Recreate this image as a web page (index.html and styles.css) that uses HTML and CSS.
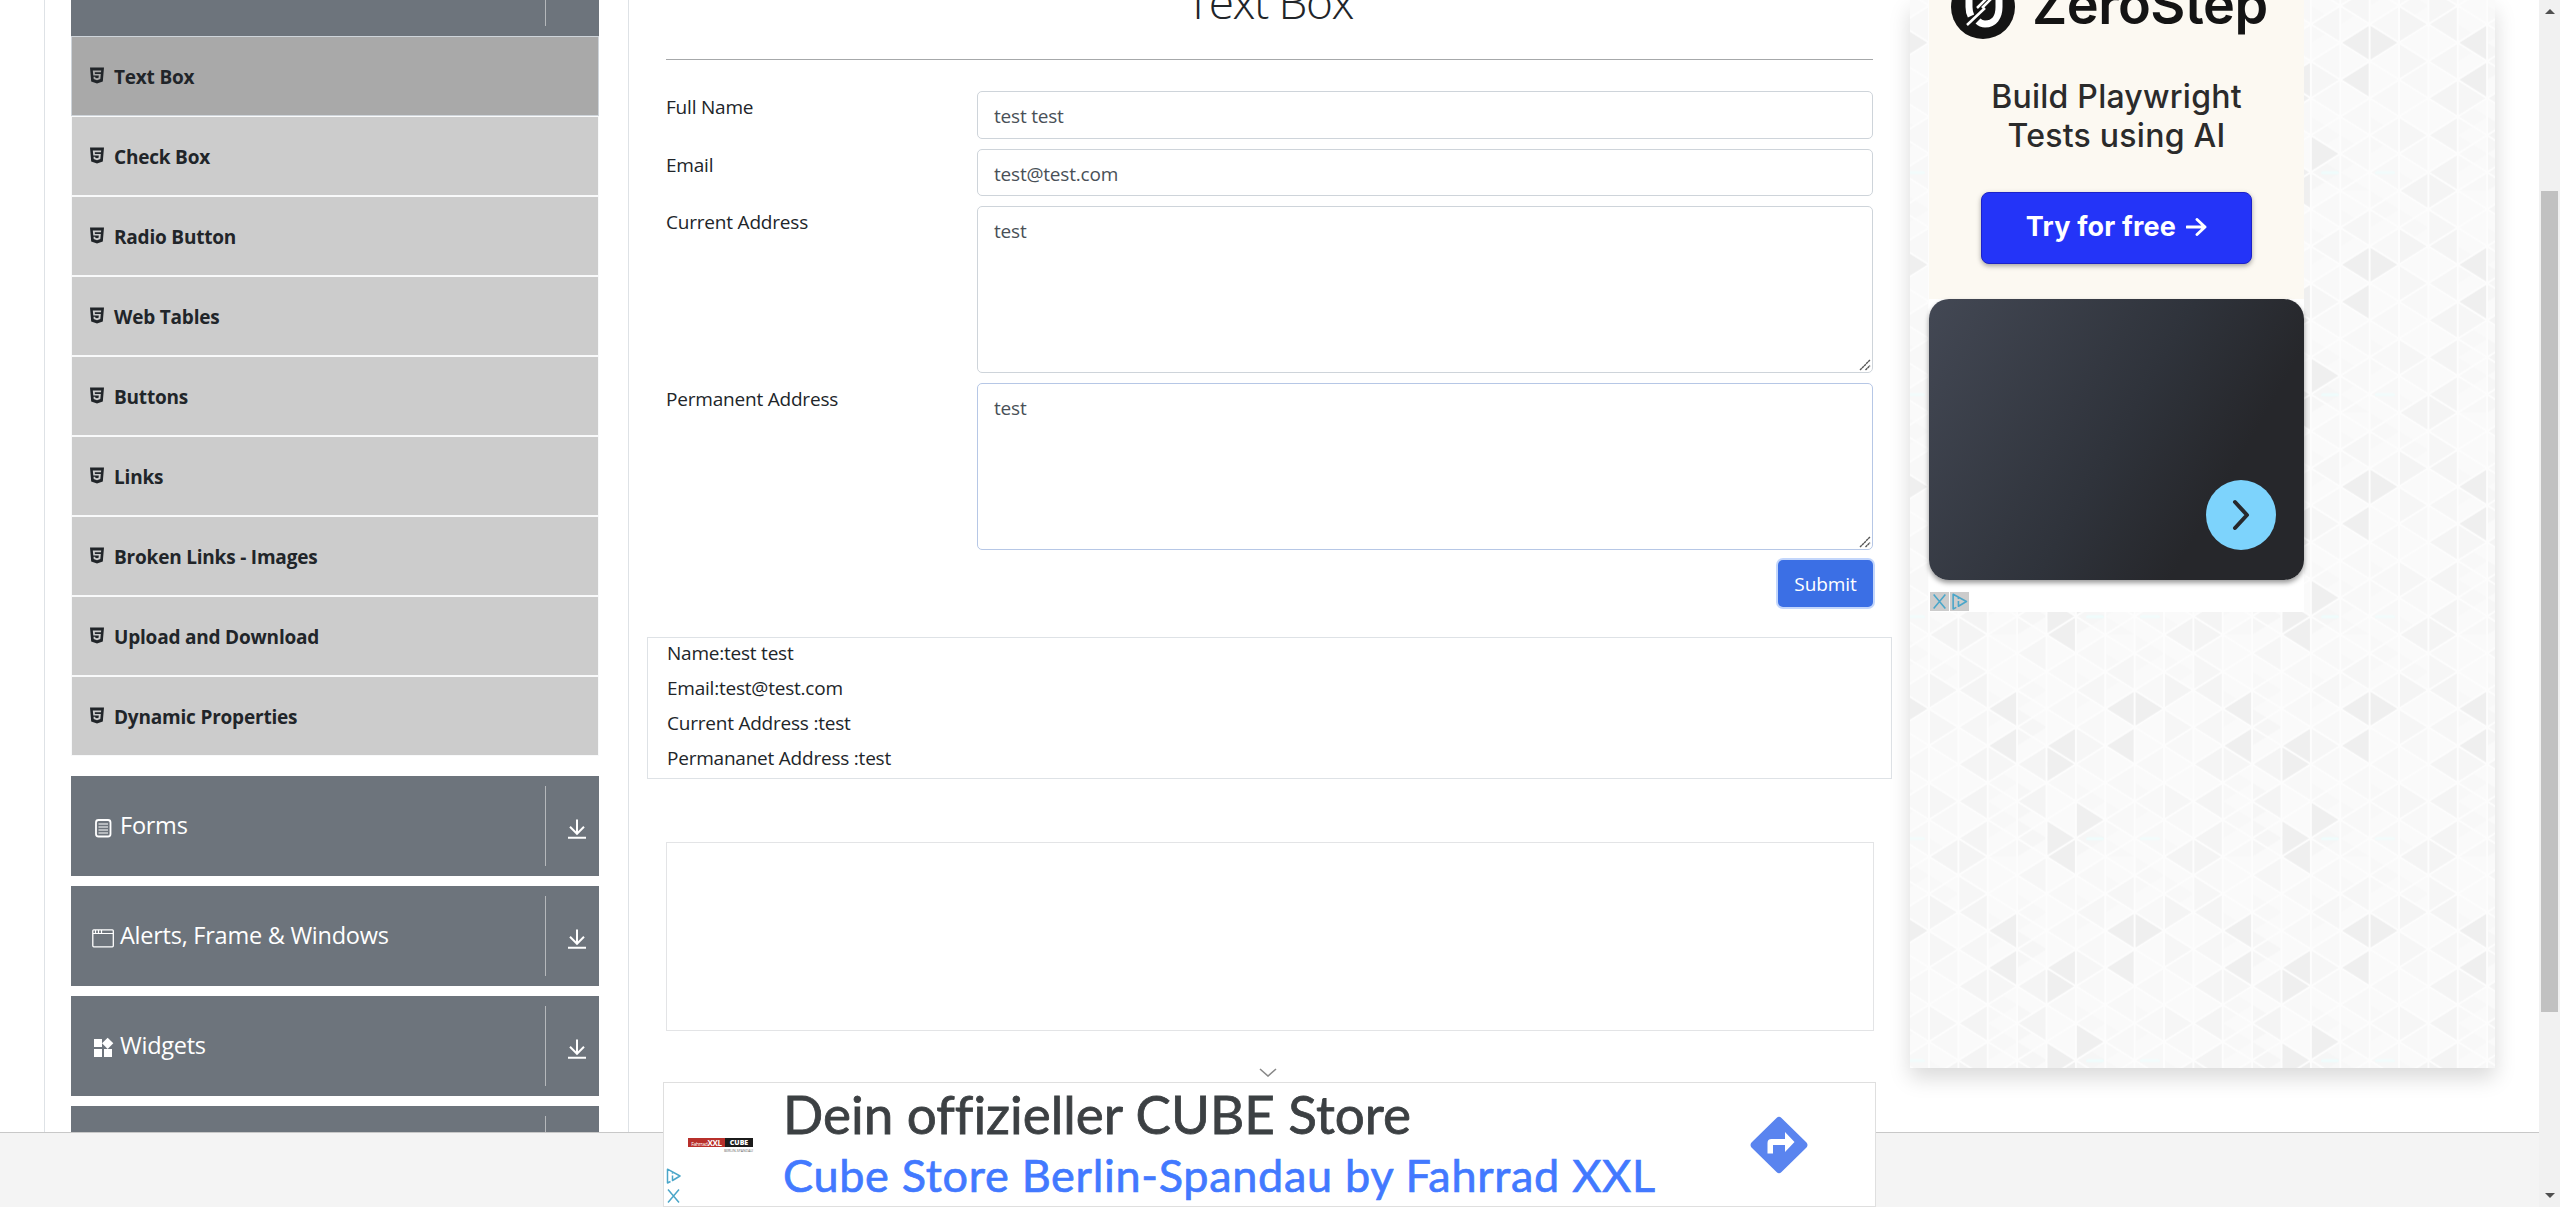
FILE: index.html
```html
<!DOCTYPE html>
<html lang="en">
<head>
<meta charset="utf-8">
<title>Text Box</title>
<link rel="stylesheet" href="styles.css">
</head>
<body>
<svg width="0" height="0" class="defs" aria-hidden="true">
  <symbol id="html5" viewBox="0 0 14 17"><path fill-rule="evenodd" d="M0 .5h14L12.8 14.6 7 16.6 1.2 14.6zM2.8 3.6l.5 5h5.5l-.2 2.2-1.6.5-1.7-.5-.1-1H3.5l.2 2.3L7 13.200l3.300-1.100.5-5.200H4.900l-.1-1.600h6.200l.2-1.700z"/></symbol>
  <symbol id="down" viewBox="0 0 20 20"><path d="M10 .5v14M3 7.800l7 7 7-7M1 18.800h18" fill="none" stroke="currentColor" stroke-width="2"/></symbol>
  <symbol id="arrow-x" viewBox="0 0 16 16"><path d="M2.500 1.500l11 13M13.500 1.500l-11 13" fill="none" stroke="currentColor" stroke-width="1.500"/></symbol>
  <symbol id="adchoice" viewBox="0 0 16 16"><path d="M5 13.500L2 15V1.200L14.500 8 7 12.500V7.500" fill="none" stroke="currentColor" stroke-width="1.500" stroke-linejoin="round"/><path d="M7 4.300v1.400" stroke="currentColor" stroke-width="1.500"/></symbol>
</svg>

<div class="page">
  <main class="content">
    <nav class="sidebar">
      <div class="group group-first"><span class="toggle"></span></div>
      <ul class="menu">
        <li class="active"><svg><use href="#html5"/></svg><span>Text Box</span></li>
        <li><svg><use href="#html5"/></svg><span>Check Box</span></li>
        <li><svg><use href="#html5"/></svg><span>Radio Button</span></li>
        <li><svg><use href="#html5"/></svg><span>Web Tables</span></li>
        <li><svg><use href="#html5"/></svg><span>Buttons</span></li>
        <li><svg><use href="#html5"/></svg><span>Links</span></li>
        <li><svg><use href="#html5"/></svg><span>Broken Links - Images</span></li>
        <li><svg><use href="#html5"/></svg><span>Upload and Download</span></li>
        <li><svg><use href="#html5"/></svg><span>Dynamic Properties</span></li>
      </ul>
      <div class="group">
        <svg class="gicon" viewBox="0 0 25 25"><rect x="5" y="4" width="14.500" height="16.500" rx="2.500" fill="none" stroke="#fff" stroke-width="1.800"/><path d="M7.500 8h9.500M7.500 11h9.500M7.500 14h9.500M7.500 17h9.500" stroke="#fff" stroke-width="1.200"/></svg>
        <span class="gname">Forms</span><span class="toggle"><svg><use href="#down"/></svg></span>
      </div>
      <div class="group">
        <svg class="gicon" viewBox="0 0 25 25"><rect x="1.800" y="3.800" width="20.500" height="17" rx="1" fill="none" stroke="#fff" stroke-width="1.300"/><path d="M2 7.500h20M4.500 4v3M7.500 4v3M10.500 4v3" stroke="#fff" stroke-width="1.200"/></svg>
        <span class="gname">Alerts, Frame &amp; Windows</span><span class="toggle"><svg><use href="#down"/></svg></span>
      </div>
      <div class="group">
        <svg class="gicon" viewBox="0 0 25 25"><path fill="#fff" d="M13 13v8h8v-8h-8zM3 21h8v-8H3v8zM3 3v8h8V3H3zm13.660-1.310L11 7.340 16.660 13l5.660-5.660-5.660-5.650z"/></svg>
        <span class="gname">Widgets</span><span class="toggle"><svg><use href="#down"/></svg></span>
      </div>
      <div class="group"><span class="toggle"></span></div>
    </nav>

    <section class="center">
      <h1>Text Box</h1>
      <form class="form">
        <label>Full Name</label><div class="field">test test</div>
        <label>Email</label><div class="field">test@test.com</div>
        <label>Current Address</label><div class="field area">test<svg class="grip" viewBox="0 0 12 12"><path d="M1 11L11 1M6.500 11L11 6.500" stroke="#555" stroke-width="1.400" stroke-dasharray="2.500 .4"/></svg></div>
        <label>Permanent Address</label><div class="field area focus">test<svg class="grip" viewBox="0 0 12 12"><path d="M1 11L11 1M6.500 11L11 6.500" stroke="#555" stroke-width="1.400" stroke-dasharray="2.500 .4"/></svg></div>
        <button type="button" class="submit">Submit</button>
      </form>
      <div class="output">
        <p>Name:test test</p>
        <p>Email:test@test.com</p>
        <p>Current Address :test</p>
        <p>Permananet Address :test</p>
      </div>
      <div class="slot"></div>
    </section>

    <aside class="side">
      <svg class="tiles" width="585" height="1068">
        <defs>
          <pattern id="tri" width="235" height="222" patternUnits="userSpaceOnUse" x="19" y="856.700">
            <rect width="235" height="222" fill="#fafafa"/>
            <g transform="scale(29.375 18.500)">
              <path fill="#f8f8f8" d="M0 1l1 1-1 1zM1 1l1-1v2zM3 1l1-1v2zM2 3l1 1-1 1zM3 2l1 1-1 1zM4 2l1-1v2zM4 4l1-1v2zM5 1l1-1v2zM6 1l1 1-1 1zM7 3l1-1v2zM0 6l1-1v2zM2 7l1 1-1 1zM5 5l1-1v2zM5 7l1-1v2zM6 8l1-1v2zM7 7l1-1v2zM0 10l1-1v2zM2 9l1 1-1 1zM4 8l1-1v2zM6 10l1-1v2zM6 11l1 1-1 1zM6 9l1 1-1 1zM7 9l1-1v2zM7 11l1-1v2zM2 12l1-1v2zM5 11l1-1v2zM5 8l1 1-1 1zM7 8l1 1-1 1zM0 11l1 1-1 1zM7 0l1 1-1 1zM5 2l1 1-1 1z"/>
              <path fill="#f6f6f6" d="M0 4l1 1-1 1zM1 5l1-1v2zM3 1l1-1v2zM3 4l1 1-1 1zM5 3l1-1v2zM5 5l1 1-1 1zM0 8l1 1-1 1zM3 8l1 1-1 1zM2 6l1 1-1 1zM6 2l1-1v2zM1 1l1 1-1 1zM3 10l1 1-1 1zM5 10l1 1-1 1z"/>
              <path fill="#f4f4f4" d="M0 2l1 1-1 1zM1 3l1-1v2zM1 7l1-1v2zM3 7l1-1v2zM1 9l1-1v2zM3 9l1-1v2zM1 11l1-1v2zM0 0l1-1v2zM1-1l1 1-1 1zM0 12l1-1v2zM1 11l1 1-1 1z"/>
              <path fill="#efefef" d="M4 0l1-1v2zM4 12l1-1v2zM4 10l1 1-1 1zM5 9l1 1-1 1zM2 4l1-1v2zM6 4l1-1v2zM7 3l1 1-1 1zM2 6l1-1v2zM4 6l1-1v2zM4 6l1 1-1 1zM6 6l1-1v2z"/>
              <path fill="none" stroke="#fdfdfd" stroke-width="2" vector-effect="non-scaling-stroke" d="M0-8l8 8M0-6l8 8M0-4l8 8M0-2l8 8M0 0l8 8M0 2l8 8M0 4l8 8M0 6l8 8M0 8l8 8M0 10l8 8M0 12l8 8M0 0l8-8M0 2l8-8M0 4l8-8M0 6l8-8M0 8l8-8M0 10l8-8M0 12l8-8M0 14l8-8M0 16l8-8M0 18l8-8M0 20l8-8M0 0v12M1 0v12M2 0v12M3 0v12M4 0v12M5 0v12M6 0v12M7 0v12M8 0v12"/>
            </g>
            <rect x="157" y="202.500" width="18" height="3" rx="1.500" fill="#effcfc"/>
            <rect x="211" y="202.500" width="20" height="3" rx="1.500" fill="#f2fcfc"/>
          </pattern>
        </defs>
        <rect width="585" height="1068" fill="url(#tri)"/>
      </svg>
      <div class="ad">
        <div class="cream">
          <div class="brand">
            <svg width="64" height="64" viewBox="0 0 64 64"><circle cx="32" cy="32" r="32" fill="#141414"/><path d="M18 14v18c0 3 .5 6 2 9M27 46c2 2 4 3 7 3 9 0 14-7 14-17V14" fill="none" stroke="#fff" stroke-width="7"/><path d="M16 50L34 33M26 33l10-10M31 33l10-10" stroke="#fff" stroke-width="2.500"/></svg>
            <span>ZeroStep</span>
          </div>
          <div class="pitch"><span>Build Playwright</span><span>Tests using AI</span></div>
          <div class="cta"><span>Try for free</span><svg width="21" height="18" viewBox="0 0 21 18"><path d="M1 9h18M11 1.500L19 9l-8 7.500" fill="none" stroke="#fff" stroke-width="2.900" stroke-linecap="round" stroke-linejoin="round"/></svg></div>
        </div>
        <div class="dark"><div class="next"><svg width="18" height="32" viewBox="0 0 18 32"><path d="M3 3l12 13L3 29" fill="none" stroke="#26282c" stroke-width="4" stroke-linecap="round" stroke-linejoin="round"/></svg></div></div>
        <div class="marks"><svg><use href="#arrow-x"/></svg><svg><use href="#adchoice"/></svg></div>
      </div>
    </aside>
  </main>
  <footer class="footer"></footer>

  <div class="anchor">
    <svg class="caret" width="18" height="9" viewBox="0 0 18 9"><path d="M1 1l8 7 8-7" fill="none" stroke="#888" stroke-width="1.600"/></svg>
    <div class="banner">
      <div class="choices"><svg><use href="#adchoice"/></svg><svg><use href="#arrow-x"/></svg></div>
      <div class="logo"><div class="logo-bar"><span class="red">Fahrrad<b>XXL</b></span><span class="black">CUBE</span></div><small>BERLIN-SPANDAU</small></div>
      <div class="copy"><span class="line1">Dein offizieller CUBE Store</span><span class="line2">Cube Store Berlin-Spandau by Fahrrad XXL</span></div>
      <svg class="route" width="58" height="58" viewBox="0 0 58 58"><path d="M26.500 2q2.500-2.500 5 0L56.500 26.500q2 2.500 0 5L31.500 56q-2.500 2.500-5 0L1.500 31.500q-2-2.500 0-5z" fill="#5a84ef"/><path d="M17.500 37.500V27q0-4 4-4H35v-7l9.500 10-9.500 10v-7H23v8.500z" fill="#fff"/></svg>
    </div>
  </div>
</div>

<div class="scrollbar"><i class="up"></i><div class="thumb"></div><i class="dn"></i></div>
</body>
</html>
```
FILE: styles.css
```css
* { box-sizing: border-box; }
body {
  margin: 0; height: 1207px; display: flex; overflow: hidden; background: #fff;
  font-family: "Open Sans", "Noto Sans", sans-serif; font-size: 19px; color: #212529;
}
.defs { position: absolute; }
.page { position: relative; flex: 1; display: flex; flex-direction: column; }
.content { height: 1132px; overflow: hidden; display: flex; align-items: flex-start; padding-left: 44px; }
.footer { flex: 1; background: #f4f4f4; border-top: 1px solid #c8c8c8; }

/* sidebar */
.sidebar { width: 585px; height: 1132px; padding: 0 29px 0 26px; border: solid #dee2e6; border-width: 0 1px; }
.group {
  height: 100px; margin-bottom: 10px; background: #6d747c; color: #fff;
  display: flex; align-items: center; padding-left: 20px;
}
.group-first { margin: -64px 0 0; }
.gicon { width: 25px; height: 25px; margin-top: 4px; }
.gname { font-size: 23.5px; margin: -2px 0 0 4px; letter-spacing: -.25px; }
.toggle { margin-left: auto; width: 54px; height: 80px; border-left: 1px solid #b5b8bb; display: flex; align-items: center; padding: 6px 0 0 21px; }
.toggle svg { width: 20px; height: 20px; }
.menu { list-style: none; margin: 0 0 20px; padding: 0; }
.menu li {
  height: 80px; background: #ccc; border: 1px solid #f8f9fa; padding: 1px 0 0 18px;
  display: flex; align-items: center; font-weight: 700; font-size: 19px; letter-spacing: -.2px;
}
.menu li.active { background: #a9a9a9; border-color: #ced4da; }
.menu svg { width: 14px; height: 17px; margin: -2px 10px 0 0; fill: #212529; }

/* form */
.center { width: 1245px; margin-left: 18px; }
h1 {
  margin: 0 19px; height: 60px; border-bottom: 1px solid #a6a8aa; text-align: center;
  font-weight: 300; font-size: 46px; line-height: 3px; letter-spacing: -1.4px;
}
.form { margin: 31px 19px 0; display: grid; grid-template-columns: 311px 1fr; row-gap: 10px; }
label { padding-top: 2px; line-height: 28px; letter-spacing: -.2px; }
.field {
  position: relative; height: 47.500px; border: 1px solid #ced4da; border-radius: 5px; padding: 8px 16px;
  line-height: 32px; color: #495057; letter-spacing: -.2px;
}
.area { height: 167px; }
.focus { border-color: #b6c7e6; }
.grip { position: absolute; right: 1px; bottom: 1px; width: 12px; height: 12px; }
.submit {
  grid-column: 2; justify-self: end; width: 95px; height: 47px; border: 0; border-radius: 5px; padding: 0;
  background: #3b6fe5; color: #fff; box-shadow: 0 0 0 2px #c3d6fb; font: inherit; letter-spacing: -.1px;
}
.output { margin-top: 30px; height: 142px; border: 1px solid #dee2e6; padding: 0 19px; }
.output p { margin: 0; height: 35px; line-height: 31px; letter-spacing: -.22px; }
.slot { margin: 63px 18px 0 19px; height: 189px; border: 1px solid #e3e4e6; }

/* right column */
.side { position: relative; width: 585px; height: 1068px; margin-left: 18px; box-shadow: 0 10px 20px rgba(0,0,0,.15); }
.tiles { position: absolute; left: 0; top: 0; }
.ad { position: relative; width: 375px; height: 612px; margin-left: 19px; background: #fff; font-family: Inter, sans-serif; }
.cream { height: 299px; background: #fcf9f2; display: flex; flex-direction: column; align-items: center; }
.brand { height: 64px; margin-top: -25px; align-self: flex-start; padding-left: 22px; display: flex; gap: 17px; color: #141414; font-size: 54px; font-weight: 600; line-height: 60px; letter-spacing: -.5px; }
.pitch { margin-top: 38px; display: flex; flex-direction: column; align-items: center; font-size: 32px; font-weight: 500; line-height: 39px; color: #2b2b2b; letter-spacing: .25px; }
.cta {
  margin-top: 37px; width: 271px; height: 72px; background: #2434f8; border: 1px solid #1c22c8; border-radius: 8px;
  box-shadow: 0 2px 5px rgba(0,0,0,.35); color: #fff; display: flex; align-items: center; justify-content: center; gap: 10px;
  font-size: 27px; font-weight: 700; padding-bottom: 3px; letter-spacing: .2px;
}
.dark { height: 281px; border-radius: 20px; background: linear-gradient(120deg, #434854, #2f333b 50%, #26272b 75%); box-shadow: 0 3px 5px rgba(0,0,0,.4); display: flex; justify-content: flex-end; align-items: flex-end; padding: 0 28px 30px 0; }
.next { width: 70px; height: 70px; border-radius: 50%; background: #7dd3fc; display: flex; align-items: center; justify-content: center; }
.marks { display: flex; gap: 1px; padding: 12px 0 0 1px; color: #4ba6c9; }
.marks svg { width: 19px; height: 19px; background: #ccc; padding: 1px; }

/* anchor ad */
.anchor { position: absolute; left: 663px; bottom: 0; width: 1213px; height: 138px; display: flex; flex-direction: column; align-items: center; }
.caret { margin: -1px 0 5px -4px; }
.banner { width: 100%; height: 125px; background: #fff; border: 1px solid #dfdfdf; display: flex; }
.choices { width: 24px; display: flex; flex-direction: column; gap: 4px; padding: 85px 0 0 1px; color: #4ba6c9; }
.choices svg { width: 17px; height: 16px; }
.logo { width: 65px; margin-top: 55px; text-align: right; line-height: 5px; color: #666; }
.logo-bar { display: flex; height: 9px; line-height: 9px; color: #fff; font-size: 5px; text-align: center; }
.logo b { font-size: 8px; }
.logo small { font-size: 3.500px; display: block; line-height: 7px; }
.red { background: #b8302b; width: 37px; letter-spacing: -.3px; }
.black { background: #1b1b1b; flex: 1; font-weight: 800; font-size: 7px; }
.copy { margin-left: 30px; width: 921px; font-family: Lato, sans-serif; display: flex; flex-direction: column; white-space: nowrap; font-variant-ligatures: none; }
.line1 { font-size: 53px; line-height: 62px; color: #3c4043; -webkit-text-stroke: .8px #3c4043; }
.line2 { font-size: 45px; line-height: 60px; color: #4279ff; letter-spacing: .7px; -webkit-text-stroke: .7px #4279ff; }
.route { margin: 33px 0 0 46px; }

/* scrollbar */
.scrollbar { width: 21px; background: #f1f1f1; display: flex; flex-direction: column; align-items: center; }
.up { margin-top: 9px; border: solid transparent; border-width: 0 5px 5px; border-bottom-color: #505050; }
.thumb { width: 17px; height: 821px; margin-top: 177px; background: #c1c1c1; }
.dn { margin-top: 181px; border: solid transparent; border-width: 5px 5px 0; border-top-color: #505050; }
```
